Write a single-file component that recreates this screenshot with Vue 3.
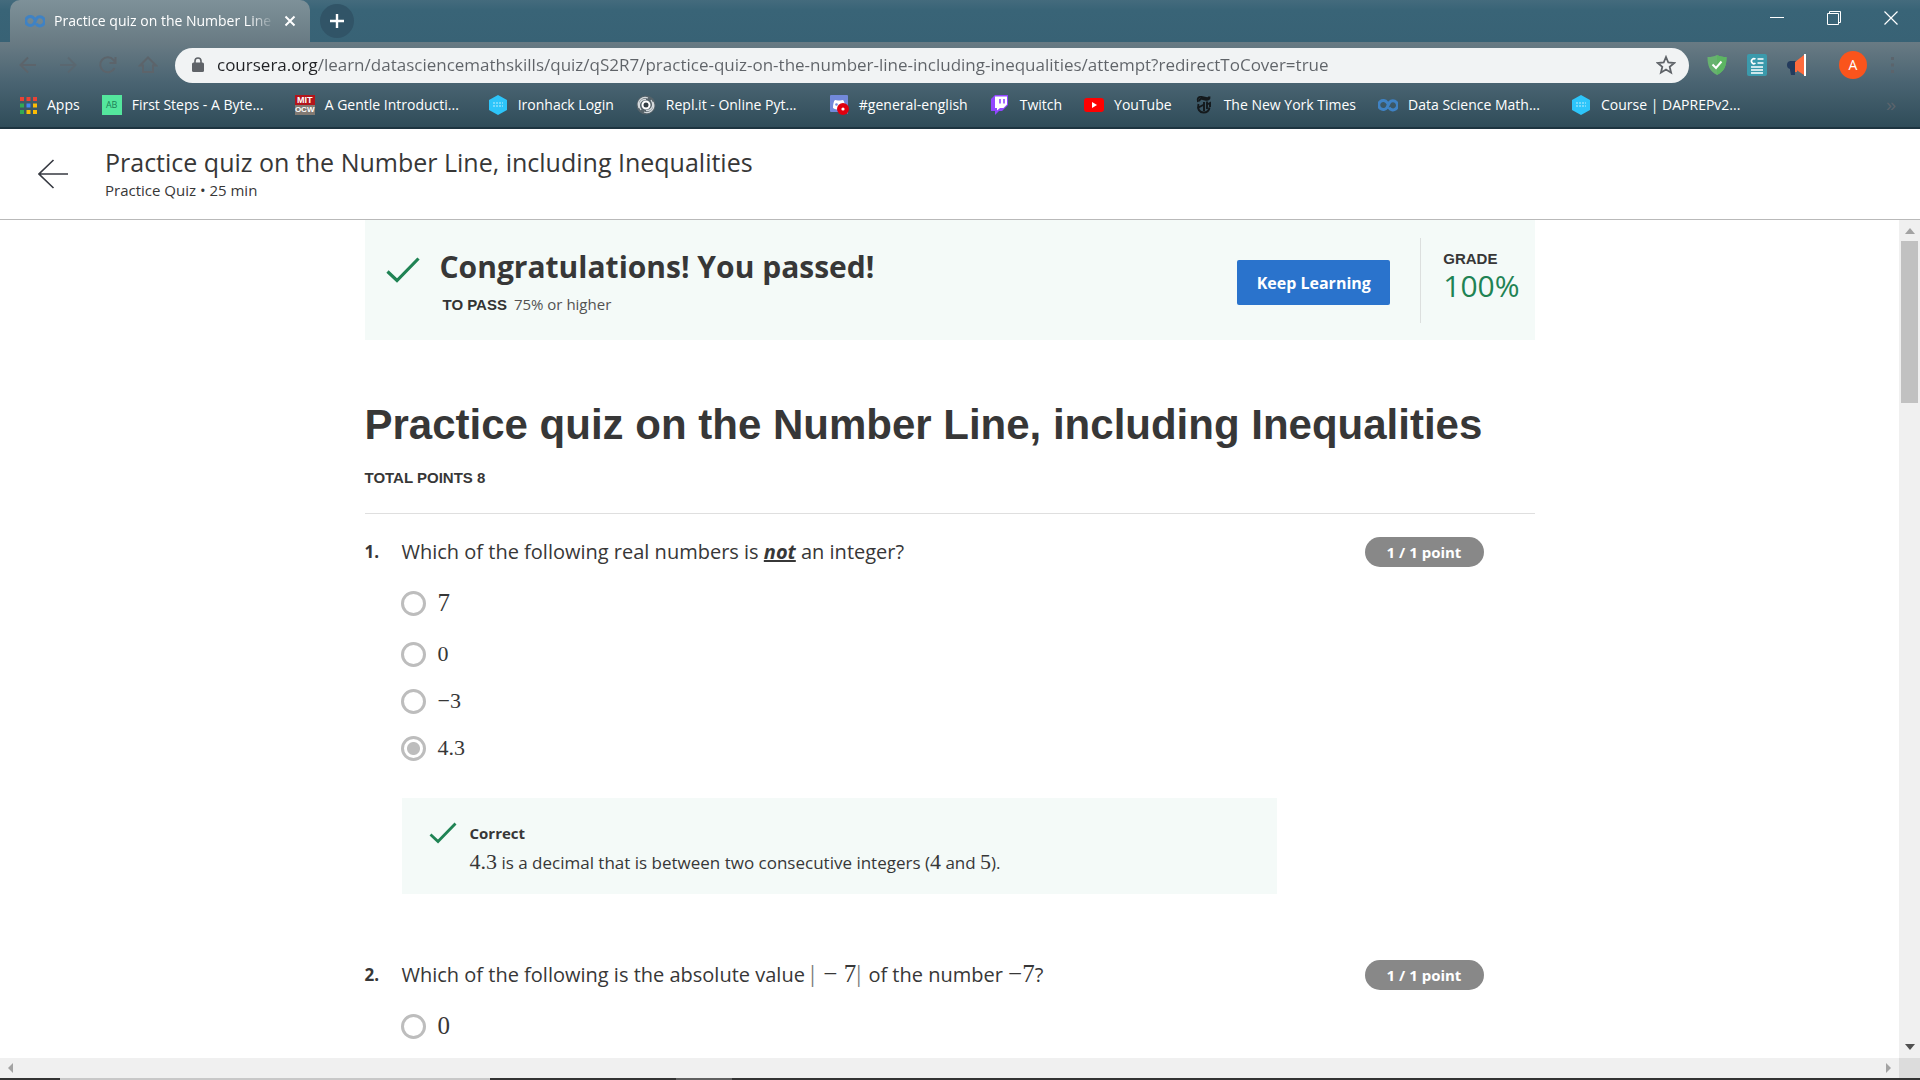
<script setup>
import { ref } from 'vue'

const url = ref('coursera.org/learn/datasciencemathskills/quiz/qS2R7/practice-quiz-on-the-number-line-including-inequalities/attempt?redirectToCover=true')

const bookmarks = [
  { icon: 'apps', label: 'Apps' },
  { icon: 'ab', label: 'First Steps - A Byte...', long: true },
  { icon: 'mit', label: 'A Gentle Introducti...', long: true },
  { icon: 'iron', label: 'Ironhack Login' },
  { icon: 'repl', label: 'Repl.it - Online Pyt...', long: true },
  { icon: 'discord', label: '#general-english' },
  { icon: 'twitch', label: 'Twitch' },
  { icon: 'youtube', label: 'YouTube' },
  { icon: 'nyt', label: 'The New York Times' },
  { icon: 'coursera', label: 'Data Science Math...', long: true },
  { icon: 'iron', label: 'Course | DAPREPv2...', long: true },
]

const appDots = ['#ea4335', '#ea4335', '#ea4335', '#34a853', '#4285f4', '#fbbc05', '#34a853', '#fbbc05', '#fbbc05']

const answers1 = [
  { text: '7', large: true },
  { text: '0' },
  { text: '−3' },
  { text: '4.3' },
]
const answers2 = [{ text: '0', large: true }]
const picked1 = ref('4.3')
const picked2 = ref('')
</script>

<template>
  <div class="browser">
    <div class="tabstrip">
      <div class="tab">
        <svg class="tab-icon" viewBox="0 0 20 14"><path d="M9 4.500A4.500 4.500 0 1 0 9 9.500L11.500 4.500A4.500 4.500 0 1 1 11 9.500M9 4.500l1 1.500" fill="none" stroke="#3f82c4" stroke-width="3" /></svg>
        <span class="tab-title">Practice quiz on the Number Line</span>
        <button class="plain" aria-label="Close tab"><svg width="12" height="12" viewBox="0 0 12 12"><path d="M1.500 1.500l9 9M10.500 1.500l-9 9" stroke="#fff" stroke-width="2" /></svg></button>
      </div>
      <button class="new-tab" aria-label="New tab"><svg width="16" height="16" viewBox="0 0 16 16"><path d="M8 1v14M1 8h14" stroke="#fff" stroke-width="2.400" /></svg></button>
      <div class="window-buttons">
        <button class="plain" aria-label="Minimize"><svg width="14" height="14" viewBox="0 0 14 14"><path d="M0 6.500h14" stroke="#fff" /></svg></button>
        <button class="plain" aria-label="Restore"><svg width="14" height="14" viewBox="0 0 14 14"><path d="M.5 2.500h11v11H.5zM2.500 2.500v-2h11v11h-2" fill="none" stroke="#fff" /></svg></button>
        <button class="plain" aria-label="Close"><svg width="14" height="14" viewBox="0 0 14 14"><path d="M.5.5l13 13M13.500.5l-13 13" stroke="#fff" stroke-width="1.200" /></svg></button>
      </div>
    </div>

    <div class="chrome">
      <div class="toolbar">
        <div class="nav">
          <button class="plain" aria-label="Back"><svg width="20" height="20" viewBox="0 0 20 20"><path d="M18 10H3M10 2.500L2.500 10l7.500 7.500" /></svg></button>
          <button class="plain faint" aria-label="Forward"><svg width="20" height="20" viewBox="0 0 20 20"><path d="M2 10h15M10 2.500l7.500 7.500-7.500 7.500" /></svg></button>
          <button class="plain" aria-label="Reload"><svg width="20" height="20" viewBox="0 0 20 20"><path d="M16.500 13A7.500 7.500 0 1 1 15.500 5L17 7M17.500 2v6H11.500" /></svg></button>
          <button class="plain" aria-label="Home"><svg width="20" height="20" viewBox="0 0 20 20"><path d="M2 10.500L10 2.500l8 8h-3V17H5v-6.500z" /></svg></button>
        </div>
        <div class="omnibox">
          <svg width="12" height="16" viewBox="0 0 12 16"><path d="M3 6V4a3 3 0 0 1 6 0v2" fill="none" stroke="#5f6368" stroke-width="1.600" /><rect y="5.500" width="12" height="9.500" rx="1.500" fill="#5f6368" /></svg>
          <input v-model="url" class="url" type="text" aria-label="Address" />
          <button class="plain" aria-label="Bookmark this page"><svg width="20" height="20" viewBox="0 0 20 20"><path d="M10 2l2.300 5.500 5.900.5-4.500 3.900 1.400 5.800L10 14.600l-5.100 3.100 1.400-5.800L1.800 8l5.900-.5z" fill="none" stroke="#5f6368" stroke-width="1.800" /></svg></button>
        </div>
        <div class="extensions">
          <svg width="20" height="22" viewBox="0 0 20 22"><path d="M10 1c3 1.500 6 2 9.500 2 0 9-2 14-9.500 18C2.500 17 .5 12 .5 3 4 3 7 2.500 10 1z" fill="#67b26f" /><path d="M10 1c3 1.500 6 2 9.500 2 0 9-2 14-9.500 18z" fill="#5cb562" /><path d="M5.500 10.500L9 14l5.500-6.500" fill="none" stroke="#fff" stroke-width="2" /></svg>
          <svg width="20" height="22" viewBox="0 0 20 22"><rect width="20" height="22" rx="2" fill="#3b9aac" /><path d="M8.500 5.200a2.500 2.500 0 1 0 0 4M10.500 5h6M10.500 9h6M4 13h12M4 16h12M4 19h12" fill="none" stroke="#fff" stroke-width="1.600" /></svg>
          <svg width="20" height="22" viewBox="0 0 20 22"><path d="M3 7h6v9H8v5H4l-1-5z" fill="#233b5d" /><circle cx="4" cy="11" r="4" fill="#233b5d" /><path d="M8 8l9-7v20l-9-6z" fill="#ff6b3d" /><path d="M9 15v3" stroke="#ff6b3d" stroke-width="2" /><path d="M18 0v22" stroke="#fff" stroke-width="2" /></svg>
        </div>
        <button class="avatar" aria-label="Profile">A</button>
        <button class="plain menu" aria-label="Menu"><svg width="4" height="18" viewBox="0 0 4 18"><path d="M0 1h3v3H0zM0 7.500h3v3H0zM0 14h3v3H0z" fill="#5b646c" /></svg></button>
      </div>

      <nav class="bookmarks">
        <a v-for="b in bookmarks" :key="b.label" href="#" class="bookmark">
          <svg v-if="b.icon === 'apps'" width="17" height="17" viewBox="0 0 17 17"><rect v-for="(c, i) in appDots" :key="i" :x="(i % 3) * 6.500" :y="Math.floor(i / 3) * 6.500" width="4" height="4" :fill="c" /></svg>
          <span v-else-if="b.icon === 'ab'" class="ab">AB</span>
          <span v-else-if="b.icon === 'mit'" class="mit"><b>MIT</b><b>OCW</b></span>
          <svg v-else-if="b.icon === 'iron'" width="20" height="20" viewBox="0 0 20 20"><path d="M10 0l9 5v10l-9 5-9-5V5z" fill="#2dc5fa" /><path d="M5 8h10M5 11h10" stroke="#8de0fb" stroke-width="1.500" stroke-dasharray="2 1" /></svg>
          <svg v-else-if="b.icon === 'repl'" width="20" height="20" viewBox="0 0 20 20"><circle cx="10" cy="10" r="9.500" fill="#56636a" /><circle cx="10" cy="10" r="3.500" fill="#333d43" stroke="#fff" stroke-width="2" /><path d="M3 13C0 5 7 1 12 3M17 7c3 8-4 12-9 10M5 15C1 9 5 4 10 4.500M15 5c4 6 0 11-5 10.500" fill="none" stroke="#d5dadd" stroke-width="1.300" /></svg>
          <svg v-else-if="b.icon === 'discord'" width="20" height="20" viewBox="0 0 20 20"><path d="M2 0h16a1 1 0 0 1 1 1v18l-3-2H2a1 1 0 0 1-1-1V1a1 1 0 0 1 1-1z" fill="#7289da" /><path d="M4 13c0-4 .8-7 2-8l3 .4h2L14 5c1.200 1 2 4 2 8-3 2-9 2-12 0z" fill="#fff" /><circle cx="7.500" cy="9.500" r="1.300" fill="#7289da" /><circle cx="14" cy="14" r="6" fill="#e0000f" /><circle cx="14" cy="14" r="1.600" fill="#fff" /></svg>
          <svg v-else-if="b.icon === 'twitch'" width="20" height="20" viewBox="0 0 20 20"><path d="M5 0L1 4v12h4v4l4-4h3l6-6V0z" fill="#9146ff" /><path d="M5 1.500h12v8L13.500 13H10l-3 2.500V13H5z" fill="#fff" /><path d="M10 4v4.500M14 4v4.500" stroke="#9146ff" stroke-width="1.600" /></svg>
          <svg v-else-if="b.icon === 'youtube'" width="20" height="20" viewBox="0 0 20 20"><rect x="0" y="3" width="20" height="14" rx="3" fill="#f00" /><path d="M8 7l5 3-5 3z" fill="#fff" /></svg>
          <svg v-else-if="b.icon === 'nyt'" width="20" height="20" viewBox="0 0 20 20"><path d="M15.500 1.500c.3 3-1.500 3.500-3.500 3.200L8 3.800C6 3.500 5 5 6 6.200M4 7C2.500 3 5 1.500 7.500 2l4.500 1c1.500.3 3 0 3.500-1.500M4.500 12.500L10 9.500M4.500 9c-1.500 5 1 8.500 5 8.500 3 0 5.500-1.500 6-5M10 7v9M13 6.500v7.500M13 9.500l3-1.500v4" fill="none" stroke="#14191c" stroke-width="1.900" /></svg>
          <svg v-else width="20" height="14" viewBox="0 0 20 14"><path d="M9 4.500A4.500 4.500 0 1 0 9 9.500L11.500 4.500A4.500 4.500 0 1 1 11 9.500M9 4.500l1 1.500" fill="none" stroke="#3f82c4" stroke-width="3" /></svg>
          <span :class="{ long: b.long }">{{ b.label }}</span>
        </a>
        <button class="plain more" aria-label="More bookmarks">»</button>
      </nav>
    </div>

    <header class="quiz-header">
      <a href="#" class="back" aria-label="Back to course"><svg width="30" height="30" viewBox="0 0 30 30"><path d="M30 15H1M15.500 1L1 15l14.500 14" fill="none" stroke="#373a42" stroke-width="1.600" /></svg></a>
      <div>
        <div class="quiz-name">Practice quiz on the Number Line, including Inequalities</div>
        <div class="quiz-meta">Practice Quiz • 25 min</div>
      </div>
    </header>

    <div class="viewport">
      <main class="page">
        <div class="content">
          <section class="banner">
            <svg class="pass-check" width="34" height="26" viewBox="0 0 34 26"><path d="M1.500 14.500L11 23.500 32.500 1.500" fill="none" stroke="#1f8354" stroke-width="3.200" /></svg>
            <div class="result">
              <h2>Congratulations! You passed!</h2>
              <p><strong>TO PASS</strong> <span>75% or higher</span></p>
            </div>
            <button class="keep">Keep Learning</button>
            <div class="grade">
              <div class="grade-label">GRADE</div>
              <div class="grade-value">100%</div>
            </div>
          </section>

          <h1>Practice quiz on the Number Line, including Inequalities</h1>
          <div class="total">TOTAL POINTS 8</div>

          <section class="question">
            <div class="prompt">
              <span class="number">1.</span>
              <p id="q1">Which of the following real numbers is <em>not</em> an integer?</p>
              <span class="points">1 / 1 point</span>
            </div>
            <div class="answers" role="radiogroup" aria-labelledby="q1">
              <label v-for="a in answers1" :key="a.text" :class="{ large: a.large }">
                <input v-model="picked1" type="radio" name="q1" :value="a.text" />
                <span class="math">{{ a.text }}</span>
              </label>
            </div>
            <div class="feedback">
              <svg width="28" height="22" viewBox="0 0 28 22"><path d="M1.500 12.500L9 19.500 26.500 1.500" fill="none" stroke="#1f8354" stroke-width="2.800" /></svg>
              <div>
                <strong>Correct</strong>
                <p><span class="math">4.3</span> is a decimal that is between two consecutive integers (<span class="math">4</span> and <span class="math">5</span>).</p>
              </div>
            </div>
          </section>

          <section class="question">
            <div class="prompt">
              <span class="number">2.</span>
              <p id="q2">Which of the following is the absolute value <span class="math"><span class="bar">|</span> − 7<span class="bar">|</span></span> of the number <span class="math">−7</span>?</p>
              <span class="points">1 / 1 point</span>
            </div>
            <div class="answers" role="radiogroup" aria-labelledby="q2">
              <label v-for="a in answers2" :key="a.text" :class="{ large: a.large }">
                <input v-model="picked2" type="radio" name="q2" :value="a.text" />
                <span class="math">{{ a.text }}</span>
              </label>
            </div>
          </section>
        </div>
      </main>
      <div class="vscroll">
        <svg width="10" height="6" viewBox="0 0 10 6"><path d="M0 6l5-6 5 6z" fill="#a3a3a3" /></svg>
        <div class="thumb"></div>
        <svg class="down" width="10" height="6" viewBox="0 0 10 6"><path d="M0 0h10L5 6z" fill="#505050" /></svg>
      </div>
    </div>
    <div class="hscroll">
      <svg width="5" height="10" viewBox="0 0 5 10"><path d="M5 0v10L0 5z" fill="#a3a3a3" /></svg>
      <svg class="right" width="5" height="10" viewBox="0 0 5 10"><path d="M0 0v10l5-5z" fill="#a3a3a3" /></svg>
      <div class="corner"></div>
    </div>
    <div class="taskbar"><div class="search"></div><div class="active-task"></div></div>
  </div>
</template>

<style>
body {
  margin: 0;
}
</style>

<style scoped>
* {
  box-sizing: border-box;
}
.browser {
  height: 100vh;
  display: flex;
  flex-direction: column;
  overflow: hidden;
  background: #fff;
  color: #373737;
  font-family: "Open Sans", "Noto Sans", sans-serif;
}
svg {
  display: block;
  flex: none;
}
p, h1, h2 {
  margin: 0;
}
.plain {
  display: flex;
  padding: 0;
  border: 0;
  background: none;
}
.tabstrip {
  flex: none;
  height: 42px;
  display: flex;
  align-items: center;
  padding-left: 10px;
  background: linear-gradient(#446b7d, #396477 10px, #386275);
}
.tab {
  width: 300px;
  height: 42px;
  display: flex;
  align-items: center;
  gap: 9px;
  padding: 0 14px 0 15px;
  border-radius: 10px 10px 0 0;
  background: linear-gradient(#7e9199, #697b84);
}
.tab-icon {
  width: 20px;
  height: 14px;
}
.tab-title {
  flex: 1;
  white-space: nowrap;
  font-size: 14px;
  line-height: 20px;
  color: #fff;
  -webkit-mask-image: linear-gradient(90deg, #000 88%, transparent);
  mask-image: linear-gradient(90deg, #000 88%, transparent);
}
.new-tab {
  width: 34px;
  height: 34px;
  margin-left: 10px;
  padding: 0;
  display: grid;
  place-items: center;
  border: 0;
  border-radius: 50%;
  background: #315467;
}
.window-buttons {
  margin-left: auto;
  display: flex;
  gap: 43px;
  padding: 0 22px 6px 0;
}
.chrome {
  flex: none;
  height: 87px;
  border-bottom: 2px solid #1d3440;
  background: linear-gradient(#697b84, #4a6472 40px, #2f4c59);
}
.toolbar {
  height: 43px;
  display: flex;
  align-items: center;
  padding: 3px 25px 0 18px;
}
.nav {
  display: flex;
  gap: 20px;
}
.nav path {
  fill: none;
  stroke: #5c646b;
  stroke-width: 2;
}
.nav .faint {
  opacity: 0.6;
}
.omnibox {
  flex: 1;
  height: 35px;
  margin-left: 17px;
  display: flex;
  align-items: center;
  padding: 0 13px 0 17px;
  border-radius: 18px;
  background: #f1f3f4;
}
.url {
  flex: 1;
  min-width: 0;
  height: 24px;
  margin-left: 13px;
  padding: 0;
  border: 0;
  outline: 0;
  font: 17px/24px "Open Sans", "Noto Sans", sans-serif;
  color: #5f6368;
  background: linear-gradient(90deg, #202124 100px, #5f6368 100px);
  -webkit-background-clip: text;
  background-clip: text;
  -webkit-text-fill-color: transparent;
}
.extensions {
  display: flex;
  gap: 20px;
  margin-left: 18px;
}
.avatar {
  width: 28px;
  height: 28px;
  margin-left: 32px;
  padding: 0;
  border: 0;
  border-radius: 50%;
  background: #fa541c;
  color: #fff;
  font: 14px/28px "Open Sans", sans-serif;
}
.menu {
  margin-left: 24px;
}
.bookmarks {
  height: 40px;
  display: flex;
  align-items: center;
  gap: 22px;
  padding: 0 24px 0 20px;
}
.bookmark {
  display: flex;
  align-items: center;
  gap: 10px;
  color: #fff;
  font-size: 14px;
  line-height: 20px;
  white-space: nowrap;
  text-decoration: none;
}
.long {
  min-width: 141px;
}
.ab {
  width: 20px;
  height: 20px;
  background: #54e69d;
  color: #1d7e56;
  font-size: 9px;
  text-align: center;
}
.mit {
  width: 20px;
  height: 20px;
  font: bold 9px/10px "Liberation Sans", sans-serif;
  text-align: center;
}
.mit b {
  display: block;
  background: #b3151b;
}
.mit b + b {
  background: #827a73;
  font-size: 8px;
}
.more {
  margin-left: auto;
  color: #5b646c;
  font-size: 18px;
}
.quiz-header {
  flex: none;
  height: 91px;
  display: flex;
  gap: 37px;
  padding: 16px 38px 0;
  border-bottom: 1px solid #b9b9b9;
}
.back {
  padding-top: 14px;
}
.quiz-name {
  font-size: 25px;
  line-height: 34px;
}
.quiz-meta {
  font-size: 15px;
  line-height: 22px;
}
.viewport {
  flex: 1;
  min-height: 0;
  display: flex;
}
.page {
  flex: 1;
  overflow: hidden;
}
.content {
  max-width: 1170px;
  margin: 0 auto;
}
.banner {
  height: 120px;
  display: flex;
  padding: 0 15px 0 21px;
  background: #f4faf8;
}
.pass-check {
  margin-top: 37px;
}
.result {
  flex: 1;
  margin-left: 20px;
  padding-top: 26px;
}
h2 {
  font-size: 30px;
  line-height: 42px;
}
.result p {
  padding: 4px 0 0 3px;
  font-size: 15px;
  line-height: 24px;
  color: #525252;
}
.result strong {
  margin-right: 3px;
  font: bold 15px "Liberation Sans", sans-serif;
  color: #333;
}
.keep {
  width: 153px;
  height: 45px;
  margin-top: 40px;
  padding: 0;
  border: 0;
  border-radius: 2px;
  background: #2a73cc;
  color: #fff;
  font: bold 16px "Open Sans", sans-serif;
}
.grade {
  height: 85px;
  margin: 18px 0 0 30px;
  padding: 11px 0 0 22px;
  border-left: 1px solid #dcdfde;
}
.grade-label {
  font: bold 15px/20px "Liberation Sans", sans-serif;
}
.grade-value {
  font-size: 30px;
  line-height: 34px;
  color: #1f8354;
}
h1 {
  margin-top: 60px;
  font: bold 42px/50px "Liberation Sans", sans-serif;
}
.total {
  height: 64px;
  padding-top: 18px;
  border-bottom: 1px solid #dfdfdf;
  font: bold 15px/20px "Liberation Sans", sans-serif;
}
.question {
  padding: 23px 0 43px;
}
.prompt {
  display: flex;
  align-items: center;
  height: 30px;
  padding-right: 51px;
}
.prompt p {
  flex: 1;
  font-size: 20px;
  line-height: 30px;
}
.number {
  width: 37px;
  padding-bottom: 2px;
  font-size: 17px;
  font-weight: bold;
}
em {
  font-weight: bold;
  text-decoration: underline;
}
.points {
  width: 119px;
  border-radius: 15px;
  background: #888;
  color: #fff;
  font-size: 15px;
  font-weight: bold;
  line-height: 30px;
  text-align: center;
}
.math {
  font-family: "Liberation Serif", serif;
  font-size: 22px;
  line-height: 24px;
}
.prompt .math,
.large .math {
  font-size: 25px;
}
.bar {
  margin-right: 2px;
  color: #777;
}
.answers {
  padding: 9px 0 26px 36px;
}
.answers label {
  height: 47px;
  display: flex;
  align-items: center;
  gap: 12px;
}
.answers label.large {
  height: 55px;
}
.answers .math {
  padding-bottom: 2px;
}
.answers input {
  appearance: none;
  width: 25px;
  height: 25px;
  margin: 0;
  border: 3px solid #bdbdbd;
  border-radius: 50%;
}
.answers input:checked {
  background: radial-gradient(circle, #bdbdbd 6px, #fff 7px);
}
.feedback {
  max-width: 875px;
  height: 96px;
  margin-left: 37px;
  display: flex;
  gap: 13px;
  padding: 24px 27px;
  background: #f4faf8;
}
.feedback strong {
  display: block;
  font-size: 15px;
  line-height: 22px;
}
.feedback p {
  font-size: 17px;
  line-height: 38px;
}
.vscroll {
  width: 21px;
  display: flex;
  flex-direction: column;
  align-items: center;
  gap: 7px;
  padding: 8px 0;
  background: #f0f0f0;
}
.thumb {
  width: 17px;
  height: 162px;
  background: #c1c1c1;
}
.down {
  margin-top: auto;
}
.hscroll {
  flex: none;
  height: 20px;
  display: flex;
  align-items: center;
  padding-left: 8px;
  background: #f0f0f0;
}
.right {
  margin-left: auto;
}
.corner {
  width: 21px;
  height: 20px;
  margin-left: 8px;
  background: #dcdcdc;
}
.taskbar {
  flex: none;
  height: 2px;
  display: flex;
  padding-left: 60px;
  background: #333;
}
.search {
  width: 430px;
  background: #c8c8c8;
}
.active-task {
  width: 56px;
  margin-left: 186px;
  background: #606060;
}
</style>
